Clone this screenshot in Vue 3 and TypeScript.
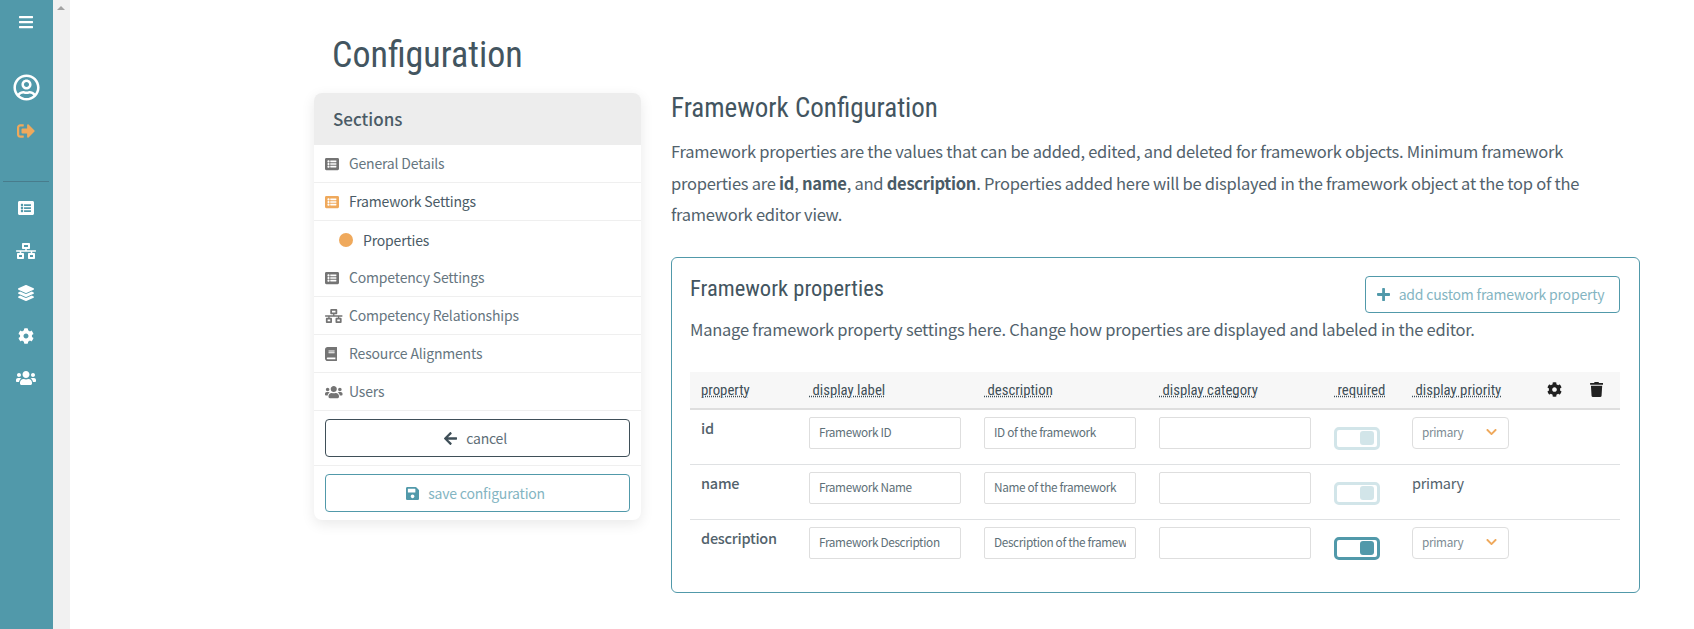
<template>
  <div class="shell">
    <nav class="rail">
      <button class="rail-btn top"><svg class="ico menu" :viewBox="icons.bars.box"><path :d="icons.bars.d" /></svg></button>
      <button class="rail-btn user"><svg class="ico avatar" :viewBox="icons.user.box"><path :d="icons.user.d" /></svg></button>
      <button class="rail-btn logout"><svg class="ico" :viewBox="icons.signOut.box"><path :d="icons.signOut.d" /></svg></button>
      <hr class="rail-rule" />
      <button v-for="name in railIcons" :key="name" class="rail-btn item">
        <svg class="ico" :viewBox="icons[name].box"><path :d="icons[name].d" /></svg>
      </button>
    </nav>
    <div class="scrollbar"><span class="scroll-up"></span></div>

    <main class="page">
      <h1 class="page-title">Configuration</h1>
      <div class="columns">
        <aside class="sections">
          <h3 class="sections-head">Sections</h3>
          <ul class="section-list">
            <li v-for="s in sections" :key="s.label" class="section" :class="{ active: s.active }">
              <span class="section-ico"><svg class="ico" :viewBox="icons[s.icon].box"><path :d="icons[s.icon].d" /></svg></span>
              {{ s.label }}
              <div v-if="s.active" class="sub"><span class="dot"></span>Properties</div>
            </li>
          </ul>
          <div class="action">
            <button class="btn btn-dark"><svg class="ico" :viewBox="icons.arrowLeft.box"><path :d="icons.arrowLeft.d" /></svg>cancel</button>
          </div>
          <div class="action last">
            <button class="btn btn-teal"><svg class="ico" :viewBox="icons.save.box"><path :d="icons.save.d" /></svg>save configuration</button>
          </div>
        </aside>

        <section class="content">
          <h2 class="content-title">Framework Configuration</h2>
          <p class="intro">
            Framework properties are the values that can be added, edited, and deleted for framework objects. Minimum framework<br />
            properties are <b>id</b>, <b>name</b>, and <b>description</b>. Properties added here will be displayed in the framework object at the top of the<br />
            framework editor view.
          </p>

          <div class="panel">
            <div class="panel-top">
              <h3 class="panel-title">Framework properties</h3>
              <button class="btn btn-teal add"><svg class="ico" :viewBox="icons.plus.box"><path :d="icons.plus.d" /></svg>add custom framework property</button>
            </div>
            <p class="panel-desc">Manage framework property settings here. Change how properties are displayed and labeled in the editor.</p>

            <div class="grid-row grid-head">
              <span class="head-label">property</span>
              <span v-for="h in headers" :key="h" class="head-label">&nbsp;{{ h }}</span>
              <svg class="ico head-ico" :viewBox="icons.cog.box"><path :d="icons.cog.d" /></svg>
              <svg class="ico head-ico" :viewBox="icons.trash.box"><path :d="icons.trash.d" /></svg>
            </div>

            <div v-for="row in rows" :key="row.key" class="grid-row prop-row">
              <span class="prop-key">{{ row.key }}</span>
              <input class="field" readonly :value="row.label" />
              <input class="field" readonly :value="row.description" />
              <input class="field" readonly value="" />
              <span class="toggle" :class="{ on: row.enabled }"><span class="knob"></span></span>
              <span v-if="row.fixedPriority" class="prio-text">primary</span>
              <span v-else class="prio-select">
                primary
                <svg class="ico chev" :viewBox="icons.chevron.box"><path :d="icons.chevron.d" /></svg>
              </span>
            </div>
          </div>
        </section>
      </div>
    </main>
  </div>
</template>

<script setup lang="ts">
type Icon = { box: string; d: string };

const icons: Record<string, Icon> = {
  bars: { box: "0 0 448 512", d: "M16 132h416c8.837 0 16-7.163 16-16V76c0-8.837-7.163-16-16-16H16C7.163 60 0 67.163 0 76v40c0 8.837 7.163 16 16 16zm0 160h416c8.837 0 16-7.163 16-16v-40c0-8.837-7.163-16-16-16H16c-8.837 0-16 7.163-16 16v40c0 8.837 7.163 16 16 16zm0 160h416c8.837 0 16-7.163 16-16v-40c0-8.837-7.163-16-16-16H16c-8.837 0-16 7.163-16 16v40c0 8.837 7.163 16 16 16z" },
  user: { box: "0 0 496 512", d: "M248 104c-53 0-96 43-96 96s43 96 96 96 96-43 96-96-43-96-96-96zm0 144c-26.5 0-48-21.5-48-48s21.5-48 48-48 48 21.5 48 48-21.5 48-48 48zm0-240C111 8 0 119 0 256s111 248 248 248 248-111 248-248S385 8 248 8zm0 448c-49.7 0-95.1-18.3-130.1-48.4 14.9-23 40.4-38.6 69.6-39.5 20.8 6.4 40.6 9.6 60.5 9.6s39.7-3.1 60.5-9.6c29.2 1 54.7 16.5 69.6 39.5-35 30.1-80.4 48.4-130.1 48.4zm162.7-84.1c-24.4-31.4-62.1-51.9-105.1-51.9-10.2 0-26 9.6-57.6 9.6-31.5 0-47.4-9.6-57.6-9.6-42.9 0-80.6 20.5-105.1 51.9C61.9 339.2 48 299.2 48 256c0-110.3 89.7-200 200-200s200 89.7 200 200c0 43.2-13.9 83.2-37.3 115.9z" },
  signOut: { box: "0 0 512 512", d: "M497 273L329 441c-15 15-41 4.5-41-17v-96H152c-13.3 0-24-10.7-24-24v-96c0-13.3 10.7-24 24-24h136V88c0-21.4 25.9-32 41-17l168 168c9.3 9.4 9.3 24.6 0 34zM192 436v-40c0-6.6-5.4-12-12-12H96c-17.7 0-32-14.3-32-32V160c0-17.7 14.3-32 32-32h84c6.6 0 12-5.4 12-12V76c0-6.6-5.4-12-12-12H96c-53 0-96 43-96 96v192c0 53 43 96 96 96h84c6.6 0 12-5.4 12-12z" },
  listAlt: { box: "0 0 512 512", d: "M464 480H48c-26.51 0-48-21.49-48-48V80c0-26.51 21.49-48 48-48h416c26.51 0 48 21.49 48 48v352c0 26.51-21.49 48-48 48zM128 120c-22.091 0-40 17.909-40 40s17.909 40 40 40 40-17.909 40-40-17.909-40-40-40zm0 96c-22.091 0-40 17.909-40 40s17.909 40 40 40 40-17.909 40-40-17.909-40-40-40zm0 96c-22.091 0-40 17.909-40 40s17.909 40 40 40 40-17.909 40-40-17.909-40-40-40zm288-136v-32c0-6.627-5.373-12-12-12H204c-6.627 0-12 5.373-12 12v32c0 6.627 5.373 12 12 12h200c6.627 0 12-5.373 12-12zm0 96v-32c0-6.627-5.373-12-12-12H204c-6.627 0-12 5.373-12 12v32c0 6.627 5.373 12 12 12h200c6.627 0 12-5.373 12-12zm0 96v-32c0-6.627-5.373-12-12-12H204c-6.627 0-12 5.373-12 12v32c0 6.627 5.373 12 12 12h200c6.627 0 12-5.373 12-12z" },
  network: { box: "0 0 640 512", d: "M640 264v-16c0-8.84-7.16-16-16-16H344v-40h72c17.67 0 32-14.33 32-32V32c0-17.67-14.33-32-32-32H224c-17.67 0-32 14.33-32 32v128c0 17.67 14.33 32 32 32h72v40H16c-8.84 0-16 7.16-16 16v16c0 8.84 7.16 16 16 16h104v40H64c-17.67 0-32 14.33-32 32v128c0 17.67 14.33 32 32 32h160c17.67 0 32-14.33 32-32V352c0-17.67-14.33-32-32-32h-56v-40h304v40h-56c-17.67 0-32 14.33-32 32v128c0 17.67 14.33 32 32 32h160c17.67 0 32-14.33 32-32V352c0-17.67-14.33-32-32-32h-56v-40h104c8.84 0 16-7.16 16-16zM256 128V64h128v64H256zm-64 320H96v-64h96v64zm352 0h-96v-64h96v64z" },
  layers: { box: "0 0 512 512", d: "M12.41 148.02l232.94 105.67c6.8 3.09 14.49 3.09 21.29 0l232.94-105.67c16.55-7.51 16.55-32.52 0-40.03L266.65 2.31a25.607 25.607 0 0 0-21.29 0L12.41 107.98c-16.55 7.51-16.55 32.53 0 40.04zm487.18 88.28l-58.09-26.33-161.64 73.27c-7.56 3.43-15.59 5.17-23.86 5.17s-16.29-1.74-23.86-5.17L70.51 209.97l-58.1 26.33c-16.55 7.5-16.55 32.5 0 40l232.94 105.59c6.8 3.08 14.49 3.08 21.29 0L499.59 276.3c16.55-7.5 16.55-32.5 0-40zm0 127.8l-57.87-26.23-161.86 73.37c-7.56 3.43-15.59 5.17-23.86 5.17s-16.29-1.74-23.86-5.17L70.29 337.87 12.41 364.1c-16.55 7.5-16.55 32.5 0 40l232.94 105.59c6.8 3.08 14.49 3.08 21.29 0L499.59 404.1c16.55-7.5 16.55-32.5 0-40z" },
  cog: { box: "0 0 512 512", d: "M487.4 315.7l-42.6-24.6c4.3-23.2 4.3-47 0-70.2l42.6-24.6c4.9-2.8 7.1-8.6 5.5-14-11.1-35.6-30-67.8-54.7-94.6-3.8-4.1-10-5.1-14.8-2.3L380.8 110c-17.9-15.4-38.5-27.3-60.8-35.1V25.8c0-5.6-3.9-10.5-9.4-11.7-36.7-8.2-74.3-7.8-109.2 0-5.5 1.2-9.4 6.1-9.4 11.7V75c-22.2 7.9-42.8 19.8-60.8 35.1L88.7 85.5c-4.9-2.8-11-1.9-14.8 2.3-24.7 26.7-43.6 58.9-54.7 94.6-1.7 5.4.6 11.2 5.5 14L67.3 221c-4.3 23.2-4.3 47 0 70.2l-42.6 24.6c-4.9 2.8-7.1 8.6-5.5 14 11.1 35.6 30 67.8 54.7 94.6 3.8 4.1 10 5.1 14.8 2.3l42.6-24.6c17.9 15.4 38.5 27.3 60.8 35.1v49.2c0 5.6 3.9 10.5 9.4 11.7 36.7 8.2 74.3 7.8 109.2 0 5.5-1.2 9.4-6.1 9.4-11.7v-49.2c22.2-7.9 42.8-19.8 60.8-35.1l42.6 24.6c4.9 2.8 11 1.9 14.8-2.3 24.7-26.7 43.6-58.9 54.7-94.6 1.5-5.5-.7-11.3-5.6-14.1zM256 336c-44.1 0-80-35.9-80-80s35.9-80 80-80 80 35.9 80 80-35.9 80-80 80z" },
  users: { box: "0 0 640 512", d: "M96 224c35.3 0 64-28.7 64-64s-28.7-64-64-64-64 28.7-64 64 28.7 64 64 64zm448 0c35.3 0 64-28.7 64-64s-28.7-64-64-64-64 28.7-64 64 28.7 64 64 64zm32 32h-64c-17.6 0-33.5 7.1-45.1 18.6 40.3 22.1 68.9 62 75.1 109.4h66c17.7 0 32-14.3 32-32v-32c0-35.3-28.7-64-64-64zm-256 0c61.9 0 112-50.1 112-112S381.9 32 320 32 208 82.1 208 144s50.1 112 112 112zm76.8 32h-8.3c-20.8 10-43.9 16-68.5 16s-47.6-6-68.5-16h-8.3C179.6 288 128 339.6 128 403.2V432c0 26.5 21.5 48 48 48h288c26.5 0 48-21.5 48-48v-28.8c0-63.6-51.6-115.2-115.2-115.2zm-223.7-13.4C161.5 263.1 145.6 256 128 256H64c-35.3 0-64 28.7-64 64v32c0 17.7 14.3 32 32 32h65.9c6.3-47.4 34.9-87.3 75.2-109.4z" },
  book: { box: "0 0 448 512", d: "M448 360V24c0-13.3-10.7-24-24-24H96C43 0 0 43 0 96v320c0 53 43 96 96 96h328c13.3 0 24-10.7 24-24v-16c0-7.5-3.5-14.3-8.9-18.7-4.2-15.4-4.2-59.3 0-74.7 5.4-4.3 8.9-11.1 8.9-18.6zM128 134c0-3.3 2.7-6 6-6h212c3.3 0 6 2.7 6 6v20c0 3.3-2.7 6-6 6H134c-3.3 0-6-2.7-6-6v-20zm0 64c0-3.3 2.7-6 6-6h212c3.3 0 6 2.7 6 6v20c0 3.3-2.7 6-6 6H134c-3.3 0-6-2.7-6-6v-20zm253.4 250H96c-17.7 0-32-14.3-32-32 0-17.6 14.4-32 32-32h285.4c-1.9 17.1-1.9 46.9 0 64z" },
  arrowLeft: { box: "0 0 448 512", d: "M257.5 445.1l-22.2 22.2c-9.4 9.4-24.6 9.4-33.9 0L7 273c-9.4-9.4-9.4-24.6 0-33.9L201.4 44.7c9.4-9.4 24.6-9.4 33.9 0l22.2 22.2c9.5 9.5 9.3 25-.4 34.3L136.6 216H424c13.3 0 24 10.7 24 24v32c0 13.3-10.7 24-24 24H136.6l120.5 114.8c9.8 9.3 10 24.8.4 34.3z" },
  save: { box: "0 0 448 512", d: "M433.941 129.941l-83.882-83.882A48 48 0 0 0 316.118 32H48C21.49 32 0 53.49 0 80v352c0 26.51 21.49 48 48 48h352c26.51 0 48-21.49 48-48V163.882a48 48 0 0 0-14.059-33.941zM224 416c-35.346 0-64-28.654-64-64 0-35.346 28.654-64 64-64s64 28.654 64 64c0 35.346-28.654 64-64 64zm96-304.52V212c0 6.627-5.373 12-12 12H76c-6.627 0-12-5.373-12-12V108c0-6.627 5.373-12 12-12h228.52c3.183 0 6.235 1.264 8.485 3.515l3.48 3.48A11.996 11.996 0 0 1 320 111.48z" },
  plus: { box: "0 0 448 512", d: "M416 208H272V64c0-17.67-14.33-32-32-32h-32c-17.67 0-32 14.33-32 32v144H32c-17.67 0-32 14.33-32 32v32c0 17.67 14.33 32 32 32h144v144c0 17.67 14.33 32 32 32h32c17.67 0 32-14.33 32-32V304h144c17.67 0 32-14.33 32-32v-32c0-17.67-14.33-32-32-32z" },
  trash: { box: "0 0 448 512", d: "M432 32H312l-9.4-18.7A24 24 0 0 0 281.1 0H166.8a23.72 23.72 0 0 0-21.4 13.3L136 32H16A16 16 0 0 0 0 48v32a16 16 0 0 0 16 16h416a16 16 0 0 0 16-16V48a16 16 0 0 0-16-16zM53.2 467a48 48 0 0 0 47.9 45h245.8a48 48 0 0 0 47.9-45L416 128H32z" },
  chevron: { box: "0 0 448 512", d: "M207.029 381.476L12.686 187.132c-9.373-9.373-9.373-24.569 0-33.941l22.667-22.667c9.357-9.357 24.522-9.375 33.901-.04L224 284.505l154.745-154.021c9.379-9.335 24.544-9.317 33.901.04l22.667 22.667c9.373 9.373 9.373 24.569 0 33.941L240.971 381.476c-9.373 9.372-24.569 9.372-33.942 0z" },
};

const railIcons = ["listAlt", "network", "layers", "cog", "users"];

const sections = [
  { label: "General Details", icon: "listAlt", active: false },
  { label: "Framework Settings", icon: "listAlt", active: true },
  { label: "Competency Settings", icon: "listAlt", active: false },
  { label: "Competency Relationships", icon: "network", active: false },
  { label: "Resource Alignments", icon: "book", active: false },
  { label: "Users", icon: "users", active: false },
];

const headers = ["display label", "description", "display category", "required", "display priority"];

const rows = [
  { key: "id", label: "Framework ID", description: "ID of the framework", enabled: false, fixedPriority: false },
  { key: "name", label: "Framework Name", description: "Name of the framework", enabled: false, fixedPriority: true },
  { key: "description", label: "Framework Description", description: "Description of the framework", enabled: true, fixedPriority: false },
];
</script>

<style>
body {
  background: #fff;
  overflow: hidden;
}
</style>

<style scoped>
.shell {
  display: flex;
  min-height: 100vh;
  font-family: "Noto Sans CJK SC", "Noto Sans", sans-serif;
  color: #52626c;
}

.ico {
  display: block;
  fill: currentColor;
}

.rail {
  width: 53px;
  box-sizing: border-box;
  padding-right: 1px;
  flex: none;
  background: #5199aa;
  color: #fff;
  display: flex;
  flex-direction: column;
  align-items: center;
}

.rail-btn {
  border: 0;
  padding: 0;
  background: none;
  color: inherit;
  display: flex;
  justify-content: center;
  align-items: center;
  height: 20px;
}

.rail-btn .ico {
  height: 16px;
  width: auto;
}

.top {
  margin-top: 12px;
}

.user {
  margin-top: 41px;
  height: 28px;
}

.rail-btn .avatar {
  width: 27px;
  height: 27px;
}

.logout {
  margin-top: 20px;
  color: #efa95c;
}

.rail-btn.logout .ico {
  height: 18px;
}

.rail-rule {
  width: 46px;
  margin: 40px 0 16px;
  border: 0;
  border-top: 1px solid #487c8c;
}

.item {
  margin-bottom: 22.5px;
}

.scrollbar {
  width: 17px;
  flex: none;
  background: #f1f1f1;
  position: relative;
}

.scroll-up {
  position: absolute;
  left: 4px;
  top: 6px;
  border-left: 4px solid transparent;
  border-right: 4px solid transparent;
  border-bottom: 4px solid #a3a3a3;
}

.page {
  flex: 1;
  padding: 30px 0 0 244px;
}

.page-title {
  margin: 0 0 0 18px;
  height: 63px;
  font-family: Roboto, sans-serif;
  font-stretch: 75%;
  font-weight: 400;
  font-size: 36px;
  line-height: 50px;
  color: #435560;
}

.columns {
  display: flex;
  align-items: flex-start;
  gap: 30px;
}

.sections {
  width: 327px;
  flex: none;
  border-radius: 8px;
  background: #fff;
  box-shadow: 0 4px 14px rgba(0, 0, 0, 0.09);
  overflow: hidden;
}

.sections-head {
  margin: 0;
  height: 52px;
  padding-left: 19px;
  background: #ededed;
  font-size: 17px;
  font-weight: 500;
  line-height: 52px;
  color: #4a5b66;
}

.section-list {
  list-style: none;
  margin: 0;
  padding: 0;
  font-size: 14px;
  letter-spacing: -0.18px;
}

.section {
  line-height: 37px;
  padding-left: 11px;
  border-bottom: 1.5px solid #efefef;
  color: #66767f;
  display: flex;
  flex-wrap: wrap;
  align-items: center;
}

.section-ico {
  width: 24px;
  color: #747474;
}

.section-ico .ico {
  height: 14px;
  width: auto;
}

.section.active {
  color: #4a5b66;
  border-bottom: 0;
}

.section.active .section-ico {
  color: #efa95c;
}

.sub {
  flex-basis: 100%;
  margin-left: -11px;
  padding-left: 25px;
  border-top: 1.5px solid #efefef;
  display: flex;
  align-items: center;
  line-height: 38px;
}

.dot {
  width: 14px;
  height: 14px;
  border-radius: 50%;
  background: #efa95c;
  margin-right: 10px;
}

.action {
  padding: 8px 11px;
  border-bottom: 1.5px solid #efefef;
}

.action.last {
  padding: 8px 11px;
  border-bottom: 0;
}

.btn {
  display: flex;
  justify-content: center;
  align-items: center;
  gap: 9px;
  width: 100%;
  height: 38px;
  padding: 0 4px 0 0;
  background: #fff;
  border-radius: 4px;
  font: inherit;
  font-size: 14px;
  letter-spacing: -0.18px;
  white-space: nowrap;
}

.btn .ico {
  height: 15px;
  width: auto;
}

.btn-dark {
  border: 1px solid #3f4f58;
  color: #5e6e77;
}

.btn-dark .ico {
  color: #3f4f58;
}

.btn-teal {
  border: 1px solid #5199aa;
  color: #84b5c2;
}

.btn-teal .ico {
  color: #5199aa;
}

.content {
  width: 969px;
  flex: none;
}

.content-title {
  margin: 0;
  font-family: Roboto, sans-serif;
  font-stretch: 75%;
  font-weight: 400;
  font-size: 27px;
  line-height: 30px;
  color: #435560;
}

.intro {
  margin: 13px 0 26px;
  font-size: 16.5px;
  letter-spacing: -0.26px;
  line-height: 31.5px;
}

.intro b {
  font-weight: 700;
  color: #4a5b66;
}

.panel {
  border: 1px solid #5199aa;
  border-radius: 6px;
  height: 336px;
  padding: 18px 18px 0;
  box-sizing: border-box;
}

.panel-top {
  display: flex;
  justify-content: space-between;
  align-items: flex-start;
}

.panel-title {
  margin: 0;
  font-family: Roboto, sans-serif;
  font-stretch: 75%;
  font-weight: 400;
  font-size: 22.5px;
  line-height: 24px;
  color: #435560;
}

.add {
  width: 255px;
  height: 37px;
  margin-right: 1px;
}

.panel-desc {
  margin: 1px 0 0;
  font-size: 16.5px;
  letter-spacing: -0.24px;
  line-height: 30px;
  height: 58px;
}

.grid-row {
  display: grid;
  grid-template-columns: 108px 175px 175px 175px 78px 135px 43px 1fr;
  padding-left: 11px;
  margin-right: 1px;
}

.grid-head {
  background: #f7f7f7;
  height: 38px;
  box-sizing: border-box;
  border-bottom: 2px solid #dedede;
  align-items: center;
  font-family: Roboto, sans-serif;
  font-stretch: 75%;
  font-size: 14.8px;
  color: #3f4f58;
}

.head-label {
  text-decoration: underline dotted;
  white-space: pre;
}

.head-ico {
  height: 15px;
  width: auto;
  color: #212121;
}

.prop-row {
  height: 55px;
  border-bottom: 1px solid #dfe1e3;
  padding-top: 7px;
  box-sizing: border-box;
  align-items: start;
}

.prop-row:last-child {
  border-bottom: 0;
}

.prop-key {
  font-size: 14.5px;
  letter-spacing: -0.25px;
  font-weight: 500;
  line-height: 22px;
}

.field {
  width: 152px;
  height: 32px;
  box-sizing: border-box;
  border: 1px solid #dedede;
  border-radius: 2px;
  padding: 0 9px 2px;
  font: inherit;
  font-size: 11.8px;
  letter-spacing: -0.35px;
  color: #5e7078;
  outline: none;
}

.toggle {
  width: 46px;
  height: 23px;
  margin-top: 10px;
  box-sizing: border-box;
  border: 3px solid #5199aa;
  border-radius: 5px;
  display: flex;
  justify-content: flex-end;
  align-items: center;
  padding-right: 3px;
  opacity: 0.25;
}

.toggle.on {
  opacity: 1;
}

.knob {
  width: 14px;
  height: 14px;
  border-radius: 3px;
  background: #5199aa;
}

.prio-text {
  font-size: 14.5px;
  letter-spacing: -0.3px;
  line-height: 22px;
}

.prio-select {
  width: 97px;
  height: 32px;
  box-sizing: border-box;
  border: 1px solid #dedede;
  border-radius: 4px;
  padding: 0 9px 2px;
  display: flex;
  align-items: center;
  justify-content: space-between;
  font-size: 11.8px;
  letter-spacing: -0.35px;
  color: #7d8c94;
}

.chev {
  width: 11px;
  height: 12px;
  color: #efa95c;
  margin-right: 2px;
}
</style>
